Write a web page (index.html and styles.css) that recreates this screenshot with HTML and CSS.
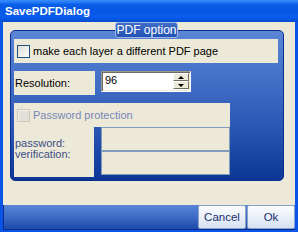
FILE: index.html
```html
<!DOCTYPE html>
<html lang="en">
<head>
    <meta charset="UTF-8">
    <title>SavePDFDialog</title>
    <link rel="stylesheet" href="styles.css">
</head>
<body>
    <div class="window">
        <div class="titlebar">SavePDFDialog</div>
        <div class="frame">
            <div class="client">
                <div class="group">
                    <div class="legend">PDF option</div>

                    <div class="panel pages">
                        <span class="check"></span>
                        <span class="check-text">make each layer a different PDF page</span>
                    </div>

                    <div class="res-row">
                        <div class="panel res-label">Resolution:</div>
                        <div class="spin">
                            <span class="spin-value">96</span>
                            <div class="spin-btns">
                                <span class="spin-btn"><span class="arrow-up"></span></span>
                                <span class="spin-btn"><span class="arrow-down"></span></span>
                            </div>
                        </div>
                    </div>

                    <div class="pw">
                        <div class="panel pw-head">
                            <span class="check disabled"></span>
                            <span class="check-text disabled-text">Password protection</span>
                        </div>
                        <div class="panel pw-labels">password:<br>verification:</div>
                        <div class="pw-fields">
                            <div class="field"></div>
                            <div class="field"></div>
                        </div>
                    </div>
                </div>
            </div>
            <div class="buttonbar">
                <button class="btn cancel">Cancel</button>
                <button class="btn ok">Ok</button>
            </div>
        </div>
    </div>
</body>
</html>
```

FILE: styles.css
```css
body {
    margin: 0;
    font-family: "Liberation Sans", Arial, sans-serif;
    font-size: 11px;
}

.window {
    width: 298px;
    height: 232px;
    display: flex;
    flex-direction: column;
}

.titlebar {
    height: 22px;
    box-sizing: border-box;
    padding: 1px 0 0 5px;
    line-height: 21px;
    color: #ffffff;
    font-weight: bold;
    font-size: 11.5px;
    background: linear-gradient(#3a8cf8 0%, #2a80fa 8%, #0a5fe8 20%, #0657e4 50%, #0a5cec 75%, #0654e0 90%, #0848c8 100%);
}

.frame {
    flex: 1;
    display: flex;
    flex-direction: column;
    border: 3px solid #0a55e8;
    border-top: 0;
}

.client {
    height: 183px;
    box-sizing: border-box;
    padding: 8px 0 0 7px;
    background: #ece9d8;
}

.group {
    position: relative;
    width: 274px;
    height: 151px;
    box-sizing: border-box;
    padding: 8px 0 0 3px;
    border: 1px solid #0b2d91;
    border-radius: 5px;
    background: linear-gradient(#5b86d6 0%, #4572c8 30%, #2a56b4 65%, #0b3696 100%);
}

.legend {
    position: absolute;
    left: 104px;
    top: -9px;
    width: 63px;
    height: 16px;
    box-sizing: border-box;
    border: 1px solid #9fb6e8;
    border-radius: 3px;
    background: linear-gradient(#3f6cc8, #2452b4);
    color: #ffffff;
    font-size: 12px;
    line-height: 14px;
    text-align: center;
}

.panel {
    background: #ece9d8;
}

.pages {
    width: 264px;
    height: 24px;
    box-sizing: border-box;
    padding-left: 3px;
    display: flex;
    align-items: center;
}

.check {
    width: 13px;
    height: 13px;
    box-sizing: border-box;
    border: 1px solid #1c5180;
    background: linear-gradient(135deg, #dcdbd3, #ffffff);
}

.check.disabled {
    border-color: #cac8bb;
    background: #e2e0d8;
    box-shadow: inset 1px 1px #f4f3ee;
}

.check-text {
    margin-left: 3px;
    color: #000000;
}

.disabled-text {
    color: #7a86b8;
}

.res-row {
    display: flex;
    align-items: flex-start;
    margin-top: 8px;
}

.res-label {
    width: 81px;
    height: 24px;
    box-sizing: border-box;
    padding: 6px 0 0 1px;
    line-height: 13px;
}

.spin {
    width: 90px;
    height: 21px;
    box-sizing: border-box;
    margin-left: 6px;
    display: flex;
    background: #ffffff;
    border: 1px solid;
    border-color: #9d9a8c #ffffff #ffffff #9d9a8c;
    box-shadow: inset 1px 1px #6f6d66, inset -1px -1px #ece9d8;
}

.spin-value {
    flex: 1;
    padding: 2px 0 0 3px;
    line-height: 13px;
}

.spin-btns {
    display: flex;
    flex-direction: column;
    margin: 1px 1px 1px 0;
}

.spin-btn {
    width: 16px;
    height: 8px;
    box-sizing: border-box;
    display: flex;
    align-items: center;
    justify-content: center;
    background: #ece9d8;
    border: 1px solid;
    border-color: #ffffff #716f64 #716f64 #ffffff;
}

.arrow-up, .arrow-down {
    width: 0;
    height: 0;
    border-left: 3px solid transparent;
    border-right: 3px solid transparent;
}

.arrow-up {
    border-bottom: 3px solid #000000;
}

.arrow-down {
    border-top: 3px solid #000000;
}

.pw {
    display: grid;
    grid-template-columns: 80px 7px 129px;
    grid-template-rows: 24px 50px;
    margin-top: 8px;
}

.pw-head {
    grid-column: 1 / 4;
    display: flex;
    align-items: center;
    padding-left: 3px;
}

.pw-labels {
    grid-column: 1;
    padding: 11px 0 0 1px;
    line-height: 11px;
    color: #3c4e86;
}

.pw-fields {
    grid-column: 3;
}

.field {
    height: 24px;
    box-sizing: border-box;
    border: 1px solid #7f9db9;
    background: #ece9d8;
}

.buttonbar {
    flex: 1;
    display: flex;
    justify-content: flex-end;
    gap: 1px;
    border-left: 1px solid #0b2d91;
    border-bottom: 1px solid #0b2d91;
    background: linear-gradient(#5887d8, #3e6bc4 50%, #1c4aab);
}

.btn {
    width: 48px;
    height: 24px;
    margin: 0;
    padding: 0;
    border: 1px solid #8ca3c9;
    border-radius: 2px;
    background: linear-gradient(#fbfcfe, #e6edf8 60%, #d6e0f2);
    color: #1b2f6b;
    font-family: "Liberation Sans", Arial, sans-serif;
    font-size: 11.5px;
}
```
